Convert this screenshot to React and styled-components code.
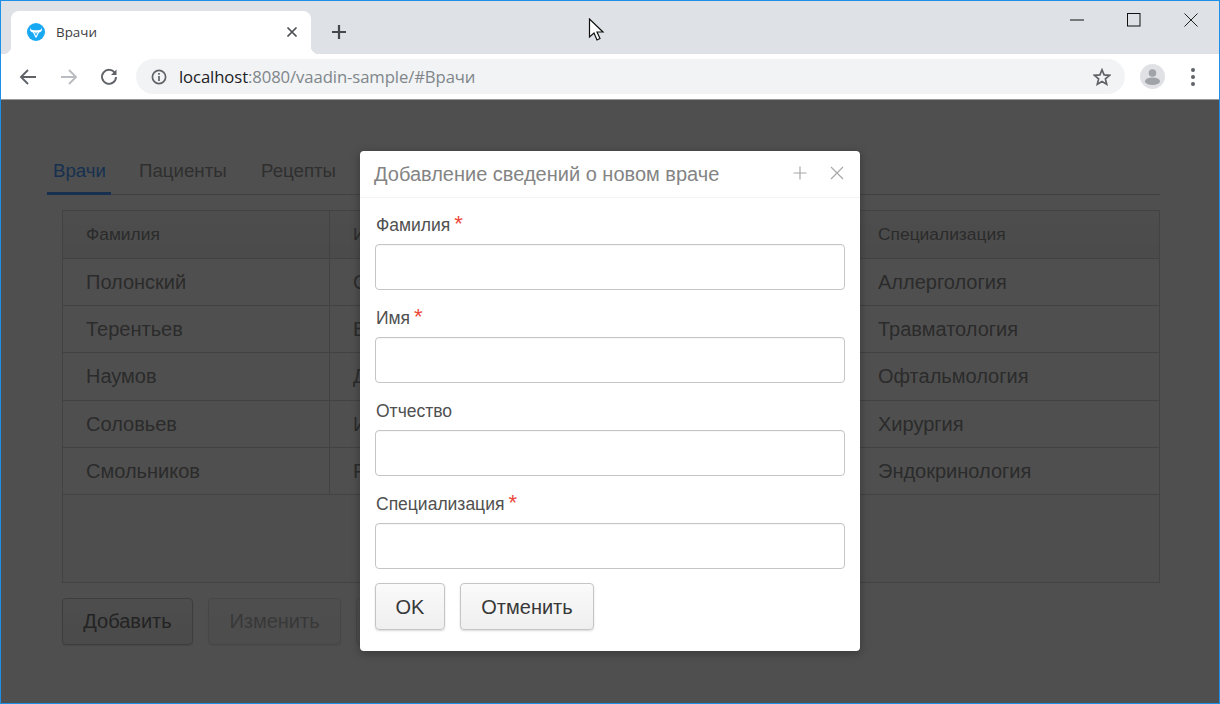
import React from 'react';
import styled, { createGlobalStyle } from 'styled-components';

const Global = createGlobalStyle`
  html, body { margin: 0; padding: 0; background: #fff; overflow: hidden; }
  * { box-sizing: border-box; }
  body { font-family: "Liberation Sans", Arial, sans-serif; }
`;

const Win = styled.div`
  position: relative; width: 1220px; height: 704px; border: 1px solid #1c8fe8; display: flex; flex-direction: column; overflow: hidden; background: #fff;
`;
const TabStrip = styled.div`
  height: 53px; background: #dee1e6; display: flex; align-items: flex-end; padding-left: 10px; flex: none; position: relative;
`;
const Tab = styled.div`
  width: 300px; height: 43px; background: #fff; border-radius: 8px 8px 0 0; display: flex; align-items: center; padding: 0 13px 2px 16px; position: relative;
  &::before, &::after { content: ""; position: absolute; bottom: 0; width: 8px; height: 8px; }
  &::before { left: -8px; background: radial-gradient(circle at 0 0, transparent 8px, #fff 8.5px); }
  &::after { right: -8px; background: radial-gradient(circle at 100% 0, transparent 8px, #fff 8.5px); }
`;
const TabTitle = styled.span`
  font-family: "Open Sans", "Noto Sans", sans-serif; font-size: 13.4px; color: #3c4043; margin-left: 11px; flex: 1;
`;
const NewTab = styled.div`
  margin-left: 17px; height: 43px; padding-bottom: 2px; display: flex; align-items: center; width: 22px; justify-content: center;
`;
const WinControls = styled.div`
  position: absolute; right: 0; top: 0; display: flex; align-items: center; height: 38px;
`;
const WinBtn = styled.div`
  width: 57px; height: 38px; display: flex; align-items: center; justify-content: center;
`;
const Cursor = styled.svg`
  position: absolute; left: 587px; top: 17px;
`;
const Toolbar = styled.div`
  height: 45px; background: #fff; display: flex; align-items: center; flex: none; padding-left: 15px;
`;
const NavBtn = styled.div`
  width: 24px; height: 24px; margin-right: 16.5px; display: flex; align-items: center; justify-content: center;
`;
const Omni = styled.div`
  width: 989px; height: 35px; margin-left: -1.5px; background: #f1f3f4; border-radius: 18px; display: flex; align-items: center; padding: 0 14px 0 15px;
`;
const Url = styled.div`
  flex: 1; margin-left: 12px; font-family: "Open Sans", "Noto Sans", sans-serif; font-size: 16.7px; color: #80868b; letter-spacing: -0.1px; white-space: nowrap;
  b { font-weight: 400; color: #202124; }
`;
const Avatar = styled.div`
  margin-left: 15px; width: 25px; height: 25px; border-radius: 50%; background: #dfe1e5; display: flex; align-items: center; justify-content: center; overflow: hidden;
`;
const Kebab = styled.div`
  margin-left: 26px; display: flex; flex-direction: column; gap: 3px;
  i { width: 4px; height: 4px; border-radius: 50%; background: #5f6368; display: block; }
`;
const Page = styled.div`
  position: relative; flex: 1; border-top: 1px solid #9a9a9a; padding: 54px 59px 0 46px; background: #fff; color: #464646; overflow: hidden;
`;
const TabBar = styled.div`
  display: flex; height: 41px; border-bottom: 1px solid #d4d4d4; align-items: stretch;
`;
const PageTab = styled.div`
  padding: 2px 6px 0; margin-right: 22px; font-size: 18.7px; line-height: 29px; height: 41px;
  color: ${p => p.$active ? '#4a9cff' : '#989898'};
  border-bottom: ${p => p.$active ? '3px solid #4a9cff' : 'none'};
  width: ${p => p.$w}px;
  white-space: nowrap;
`;
const Grid = styled.div`
  margin: 15px 0 0 15px; width: 1098px; height: 373px; border: 1px solid #d4d4d4; background: #fafafa;
`;
const Row = styled.div`
  display: grid; grid-template-columns: 266px 525px 1fr; height: ${p => p.$h}px; border-bottom: 1px solid #d4d4d4;
  background: ${p => p.$head ? '#f4f4f4' : '#fff'};
  background-image: ${p => p.$head ? 'linear-gradient(#f8f8f8, #f2f2f2)' : 'none'};
`;
const Cell = styled.div`
  padding: ${p => p.$head ? '0' : '1px'} 0 0 23px; display: flex; align-items: center; border-left: ${p => p.$first ? 'none' : '1px solid #d4d4d4'};
  font-size: ${p => p.$head ? '17.4px' : '20px'}; color: #8c8c8c; white-space: nowrap;
`;
const Actions = styled.div`
  display: flex; gap: 15px; margin: 15px 0 0 15px;
`;
const PageButton = styled.div`
  width: ${p => p.$w}px; height: 47px; border: 1px solid #c5c5c5; border-radius: 4px; background: linear-gradient(#fafafa, #efefef);
  box-shadow: 0 1px 2px rgba(0,0,0,.12); display: flex; align-items: center; justify-content: center; font-size: 20px; color: #707070;
  opacity: ${p => p.$off ? 0.5 : 1};
`;
const Overlay = styled.div`
  position: absolute; inset: 0; background: rgba(0,0,0,.69);
`;
const Dialog = styled.div`
  position: absolute; left: 359px; top: 51px; width: 500px; height: 500px; background: #fff; border-radius: 4px; box-shadow: 0 2px 10px rgba(0,0,0,.3); display: flex; flex-direction: column;
`;
const DialogHead = styled.div`
  height: 47px; flex: none; border-bottom: 1px solid #f4f4f4; display: flex; align-items: center; padding: 0 16px 0 14px;
`;
const DialogTitle = styled.div`
  flex: 1; font-size: 20px; color: #848484; white-space: nowrap;
`;
const HeadIcons = styled.div`
  display: flex; gap: 23px; align-items: center; margin-top: -3px;
`;
const Form = styled.div`
  padding: 15px 15px 0; display: flex; flex-direction: column;
`;
const Field = styled.div`
  height: 93px; display: flex; flex-direction: column;
`;
const Label = styled.div`
  height: 31px; padding: 0 0 0 1px; font-size: 17.5px; line-height: 24px; color: #505050; white-space: nowrap;
  span { color: #ed473b; font-size: 22px; line-height: 20px; margin-left: 4px; }
`;
const Input = styled.div`
  height: 46px; border: 1px solid #c5c5c5; border-radius: 4px; background: #fff; box-shadow: inset 0 1px 0 #f7f7f7;
`;
const DialogActions = styled.div`
  display: flex; gap: 15px; margin-top: -2px;
`;
const DialogButton = styled.div`
  width: ${p => p.$w}px; height: 47px; padding-top: 1px; border: 1px solid #c5c5c5; border-radius: 4px; background: linear-gradient(#fafafa, #efefef);
  box-shadow: 0 1px 2px rgba(0,0,0,.15); display: flex; align-items: center; justify-content: center; font-size: 20px; color: #383838;
`;

const rows = [
  ['Полонский', 'Олег', 'Аллергология'],
  ['Терентьев', 'Виктор', 'Травматология'],
  ['Наумов', 'Дмитрий', 'Офтальмология'],
  ['Соловьев', 'Игорь', 'Хирургия'],
  ['Смольников', 'Роман', 'Эндокринология'],
];
const fields = [
  ['Фамилия', true], ['Имя', true], ['Отчество', false], ['Специализация', true],
];

export default function App() {
  return (
    <Win>
      <Global />
      <TabStrip>
        <Tab>
          <svg width="18" height="18" viewBox="0 0 18 18">
            <circle cx="9" cy="9" r="9" fill="#18a9f2" />
            <path d="M3 4.6 C3.4 7 5.2 7.2 7 7.2 H11 C12.8 7.2 14.6 7 15 4.6 V6.8 C14.6 8.8 13.2 9.4 12 9.4 L9.6 14.4 H8.4 L6 9.4 C4.8 9.4 3.4 8.8 3 6.8Z" fill="#fff" />
            <path d="M7.2 9.2 H8.2 L9 11.2 L9.8 9.2 H10.8 L9.2 12.8 H8.8Z" fill="#18a9f2" />
          </svg>
          <TabTitle>Врачи</TabTitle>
          <svg width="12" height="12" viewBox="0 0 12 12"><path d="M1.5 1.5 L10.5 10.5 M10.5 1.5 L1.5 10.5" stroke="#4a4d51" strokeWidth="1.7" /></svg>
        </Tab>
        <NewTab>
          <svg width="16" height="16" viewBox="0 0 16 16"><path d="M8 1 V15 M1 8 H15" stroke="#44474b" strokeWidth="2.2" /></svg>
        </NewTab>
        <Cursor width="18" height="26" viewBox="0 0 18 26">
          <path d="M1.5 1 V19 L6 15 L9 22 L12 20.5 L9 14 H15Z" fill="#fff" stroke="#111" strokeWidth="1.2" />
        </Cursor>
        <WinControls>
          <WinBtn><svg width="14" height="2" viewBox="0 0 14 2"><path d="M0 1 H14" stroke="#111" strokeWidth="1" /></svg></WinBtn>
          <WinBtn><svg width="14" height="14" viewBox="0 0 14 14"><rect x=".5" y=".5" width="12.5" height="12.5" fill="none" stroke="#111" strokeWidth="1" /></svg></WinBtn>
          <WinBtn><svg width="14" height="14" viewBox="0 0 14 14"><path d="M.5 .5 L13.5 13.5 M13.5 .5 L.5 13.5" stroke="#222" strokeWidth="1" /></svg></WinBtn>
        </WinControls>
      </TabStrip>
      <Toolbar>
        <NavBtn>
          <svg width="18" height="18" viewBox="0 0 18 18"><path d="M17 9 H2 M9 2 L2 9 L9 16" fill="none" stroke="#5f6368" strokeWidth="1.9" /></svg>
        </NavBtn>
        <NavBtn>
          <svg width="18" height="18" viewBox="0 0 18 18"><path d="M1 9 H16 M9 2 L16 9 L9 16" fill="none" stroke="#b9bcc0" strokeWidth="1.9" /></svg>
        </NavBtn>
        <NavBtn>
          <svg width="18" height="18" viewBox="0 0 18 18"><path d="M15 5.2 A7 7 0 1 0 16 9" fill="none" stroke="#5f6368" strokeWidth="1.9" /><path d="M16.5 1.5 V7 H11Z" fill="#5f6368" /></svg>
        </NavBtn>
        <Omni>
          <svg width="16" height="16" viewBox="0 0 16 16"><circle cx="8" cy="8" r="6.6" fill="none" stroke="#5f6368" strokeWidth="1.7" /><path d="M8 7 V12 M8 4 V5.8" stroke="#5f6368" strokeWidth="1.7" /></svg>
          <Url><b>localhost</b>:8080/vaadin-sample/#Врачи</Url>
          <svg width="18" height="18" viewBox="0 0 18 18"><path d="M9 1.8 L11.1 6.9 L16.6 7.3 L12.4 10.9 L13.7 16.2 L9 13.4 L4.3 16.2 L5.6 10.9 L1.4 7.3 L6.9 6.9Z" fill="none" stroke="#5f6368" strokeWidth="1.7" /></svg>
        </Omni>
        <Avatar>
          <svg width="25" height="25" viewBox="0 0 25 25"><circle cx="12.5" cy="9" r="3.8" fill="#a0a3a8" /><ellipse cx="12.5" cy="17.2" rx="7.5" ry="3.8" fill="#a0a3a8" /></svg>
        </Avatar>
        <Kebab><i /><i /><i /></Kebab>
      </Toolbar>
      <Page>
        <TabBar>
          <PageTab $active $w={64}>Врачи</PageTab>
          <PageTab $w={100}>Пациенты</PageTab>
          <PageTab $w={100}>Рецепты</PageTab>
        </TabBar>
        <Grid>
          <Row $head $h={48}>
            <Cell $first $head>Фамилия</Cell>
            <Cell $head>Имя</Cell>
            <Cell $head>Специализация</Cell>
          </Row>
          {rows.map(r => (
            <Row key={r[0]} $h={47.2}>
              <Cell $first>{r[0]}</Cell>
              <Cell>{r[1]}</Cell>
              <Cell>{r[2]}</Cell>
            </Row>
          ))}
        </Grid>
        <Actions>
          <PageButton $w={131}>Добавить</PageButton>
          <PageButton $off $w={133}>Изменить</PageButton>
          <PageButton $off $w={120}>Удалить</PageButton>
        </Actions>
        <Overlay />
        <Dialog>
          <DialogHead>
            <DialogTitle>Добавление сведений о новом враче</DialogTitle>
            <HeadIcons>
              <svg width="14" height="14" viewBox="0 0 14 14"><path d="M7 .5 V13.5 M.5 7 H13.5" stroke="#a8a8a8" strokeWidth="1.2" /></svg>
              <svg width="14" height="14" viewBox="0 0 14 14"><path d="M1 1 L13 13 M13 1 L1 13" stroke="#a8a8a8" strokeWidth="1.2" /></svg>
            </HeadIcons>
          </DialogHead>
          <Form>
            {fields.map(([n, req]) => (
              <Field key={n}>
                <Label>{n}{req && <span>*</span>}</Label>
                <Input />
              </Field>
            ))}
            <DialogActions>
              <DialogButton $w={70}>OK</DialogButton>
              <DialogButton $w={134}>Отменить</DialogButton>
            </DialogActions>
          </Form>
        </Dialog>
      </Page>
    </Win>
  );
}
